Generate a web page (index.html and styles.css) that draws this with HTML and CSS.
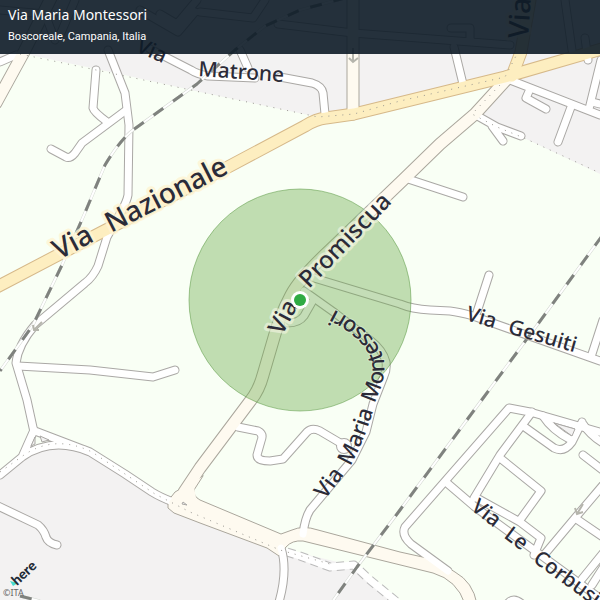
FILE: index.html
```html
<!DOCTYPE html>
<html lang="it">
<head>
<meta charset="utf-8">
<title>Via Maria Montessori</title>
<link rel="stylesheet" href="styles.css">
</head>
<body>
<main class="map">
<svg class="canvas" viewBox="0 0 600 600" preserveAspectRatio="xMidYMid slice" aria-label="Mappa">
<defs>
  <g id="streets">
    <path d="M108 50L125 93L129 125L128 195Q127 201 121 212L107 237L98 266Q93 277 85 283L35 325Q18 345 16 363L27 400L34 432"/>
    <path d="M96 70L93 108Q94 112 106 121M51 149L66 157Q70 159 75 153L82 143L125 111"/>
    <path d="M18 366L90 370L153 377L175 370"/>
    <path d="M150 49L191 70Q197 74 208 76L255 78M280 77L312 83Q322 86 323 93L325 114M240 50L248 68"/>
    <path d="M454 47L463 84M510 80L600 115M530 89L526 98L546 109M571 107L558 142M601 60L589 109M600 104L592 102"/>
    <path d="M474 114L497 127L521 136M492 126L503 141"/>
    <path d="M405 178L463 197"/>
    <path d="M314 278L400 304Q412 309 430 310L450 311Q459 312 473 316L600 361M489 275L477 312M591 357L603 320"/>
    <path d="M304 291L335 313L370 340Q383 350 386 362Q387 370 384 376L373 404L366 432L352 460L310 510Q305 518 303 534"/>
    <path d="M312 302L304 316Q299 323 288 323"/>
    <path d="M238 427L258 431Q264 434 261 441L257 455Q257 461 270 461L283 459L307 432Q312 427 320 431L342 444"/>
    <path d="M0 475L22 457Q52 436 90 452L125 474L152 492Q160 497 173 502M34 430L22 457M35 431L90 452"/>
    <path d="M-2 506L38 525Q44 530 46 537Q48 543 57 545"/>
    <path d="M281 548Q288 570 279 602"/>
    <path d="M603 433L530 412L509 408L405 527Q401 535 411 544L448 571"/>
    <path d="M447 483L475 507L605 602M532 412L500 455L474 498M500 458L541 491L520 520M475 497L520 522L541 538L534 555"/>
    <path d="M526 428L554 448Q564 453 572 442L582 422M543 416Q552 430 571 440M583 424Q590 435 603 443M583 455L605 472"/>
    <path d="M603 485L575 518L544 555M575 518L603 537M604 552L582 579M608 560L592 585M0 62L16 55M506 606Q513 594 524 606"/>
    <path d="M0 10L45 14L55 40M75 0L60 35M140 10L178 32L195 12M160 14L177 24L197 0M200 12L253 18L265 0M278 24L353 33L510 45M451 28L470 28L470 40M565 0L572 50M585 38L588 60"/>
  </g>
  <g id="connectors">
    <path d="M-4 103L25 50L52 -4M353 0V114"/>
    <path d="M507 79L475 114L440 144L403 180L330 250Q300 278 291 295Q280 316 275 334L263 375Q259 390 251 400L200 468L184 492"/>
  </g>
  <path id="junction" d="M182 488L175 492L168 501L168 508L174 513L200 523L267 548L279 556L286 547Q292 540 303 541L433 573Q457 580 465 604L477 604Q473 582 455 572Q443 563 427 558L400 552L318 530Q303 525 292 530L281 534L200 500Q193 496 194 490L203 476Z"/>
  <g id="highway">
    <path d="M-5 288L100 233L228 167L305 126Q316 119 326 118L354 114L505 77L605 48"/>
    <path d="M512 76L521 52L530 0"/>
  </g>
  <g id="railway">
    <path d="M345 -2L300 10L265 26L235 50L197 84L133 130Q120 140 105 165L84 215L62 265L33 325L0 371"/>
    <path d="M602 236L535 328L478 405L400 510L357 567L332 602M20 596L40 601"/>
  </g>
  <path id="lane" d="M287 552L300 556L330 567L354 565L370 580L397 602"/>
  <path id="montessori" d="M325 500L349 468C362 446 371 420 376 400C383 384 385 374 384 362C382 350 374 337 361 327Q350 317 327 306"/>
</defs>

<rect class="land" width="600" height="600"/>
<path class="town" d="M0 0H600V174L524 138L472 114L507 79L318 117L200 92L120 74L30 55L0 60Z"/>
<path class="town" d="M0 478L22 457Q52 436 90 452L160 497L200 518L280 548L350 565L398 600H0Z"/>

<use href="#lane" class="lane-edge"/>
<use href="#lane" class="lane-fill"/>
<use href="#streets" class="street-edge"/>
<circle class="bulb-edge" cx="344" cy="446" r="8"/>
<use href="#connectors" class="connector-edge"/>
<use href="#junction" class="junction"/>
<use href="#highway" class="highway-edge"/>
<use href="#streets" class="street-fill"/>
<circle class="bulb" cx="344" cy="446" r="7"/>
<use href="#connectors" class="connector-fill"/>
<path class="junction-fill" d="M185 486L176 493L169 502L171 507L190 507L196 498L194 487L198 480Z"/>
<use href="#railway" class="rail-edge"/>
<use href="#railway" class="rail-bed"/>
<use href="#railway" class="rail-dash"/>
<use href="#highway" class="highway-fill"/>

<path class="island" d="M35 437L31 446L35 444ZM40 436L49 440L42 442ZM183 502L187 505L182 504ZM554 423L575 429L572 436Z"/>
<path class="dots" d="M0 472L24 455Q55 434 92 452L155 494L190 512L280 550L330 564"/>
<path class="dots" d="M20 54L120 75L200 92L318 117L354 114L400 101L505 77L517 54M500 85L472 114L497 127L524 138L600 173"/>
<path class="arrow" d="M353 48V62M349 58L353 62L358 58M42 322L34 330M33 325L34 330L39 330M583 504L577 514M575 508L577 514L583 512"/>

<circle class="zone" cx="300" cy="300" r="111"/>

<g class="labels">
  <g class="label-highway">
    <text transform="translate(59 260) rotate(-28)">Via</text>
    <text transform="translate(111 233) rotate(-27)">Nazionale</text>
    <text transform="translate(528 39) rotate(-86)">Via</text>
  </g>
  <g class="label-connector">
    <text transform="translate(282 336) rotate(-62)">Via</text>
    <text transform="translate(309 289) rotate(-46)">Promiscua</text>
  </g>
  <g class="label-street">
    <text transform="translate(135 51) rotate(24)">Via</text>
    <text transform="translate(198 76) rotate(4)">Matrone</text>
    <text transform="translate(465 320) rotate(16)">Via</text>
    <text transform="translate(507 333) rotate(16)">Gesuiti</text>
    <text transform="translate(470 509) rotate(38)">Via</text>
    <text transform="translate(503 537) rotate(37)">Le</text>
    <text transform="translate(532 561) rotate(36)">Corbusier</text>
  </g>
  <g class="label-curved">
    <text><textPath href="#montessori">Via</textPath></text>
    <text><textPath href="#montessori" startOffset="42">Maria</textPath></text>
    <text><textPath href="#montessori" startOffset="109">Montessori</textPath></text>
  </g>
</g>

<circle class="pin-ring" cx="300" cy="300" r="9"/>
<circle class="pin" cx="300" cy="300" r="6"/>

<path class="logo-mark" d="M10 581L18 583L13 586Z"/>
<text class="logo" transform="translate(17 586) rotate(-43)">here</text>
<text class="credit" x="3" y="596">©ITA</text>
</svg>
<header class="bar">
  <h1 class="title">Via Maria Montessori</h1>
  <p class="place">Boscoreale, Campania, Italia</p>
</header>
</main>
</body>
</html>
```
FILE: styles.css
```css
body { margin: 0; font-family: "Noto Sans", sans-serif; }
.map { position: relative; min-height: 100vh; overflow: hidden; }
.canvas { display: block; width: 100%; height: 100vh; }

.bar { position: absolute; top: 0; left: 0; right: 0; box-sizing: border-box; padding: 5px 8px 10px; background: rgba(13, 27, 39, 0.9); color: #fff; }
.title { margin: 0; font-size: 14px; line-height: 20px; font-weight: 400; }
.place { margin: 4px 0 0; font-size: 11px; line-height: 15px; font-family: Roboto, sans-serif; }

use { fill: none; stroke-linejoin: round; stroke-linecap: round; }
.land { fill: #f9fff5; }
.town { fill: #f3f2f2; }

.street-edge { stroke: #aaa8a5; stroke-width: 9px; }
.street-fill { stroke: #fff; stroke-width: 7px; }
.bulb-edge { fill: #aaa8a5; }
.bulb { fill: #fff; }
.connector-edge { stroke: #aaa69c; stroke-width: 13px; }
.connector-fill { stroke: #fefaf0; stroke-width: 11px; }
.junction { fill: #fefaf0; stroke: #aaa69c; stroke-width: 1px; }
.junction-fill { fill: #fefaf0; }
.highway-edge { stroke: #d6b98a; stroke-width: 13px; }
.highway-fill { stroke: #fdeec0; stroke-width: 11px; }
.lane-edge { stroke: #bbb; stroke-width: 9px; stroke-dasharray: 8 5; stroke-linecap: butt; }
.lane-fill { stroke: #fff; stroke-width: 7px; }

.rail-edge { stroke: #d3d7d1; stroke-width: 3px; stroke-linecap: butt; }
.rail-bed { stroke: #fff; stroke-width: 2px; stroke-linecap: butt; }
.rail-dash { stroke: #7f827e; stroke-width: 3px; stroke-dasharray: 12 12; stroke-linecap: butt; }

.island { fill: #f3f2f2; stroke: #aaa8a5; stroke-width: 1px; }
.dots { fill: none; stroke: #999791; stroke-width: 1px; stroke-dasharray: 1 6; }
.arrow { fill: none; stroke: #b5b5ac; stroke-width: 2px; }

.zone { fill: rgba(107, 171, 75, 0.4); stroke: rgba(80, 145, 55, 0.5); stroke-width: 1px; }
.pin-ring { fill: #fff; }
.pin { fill: #2fab43; }

.labels { fill: #2b2b38; font-weight: 500; paint-order: stroke; stroke-linejoin: round; }
.label-highway { font-size: 28px; stroke: rgba(255, 244, 210, 0.8); stroke-width: 6px; }
.label-connector { font-size: 24px; stroke: rgba(255, 251, 238, 0.5); stroke-width: 6px; }
.label-street { font-size: 21px; stroke: rgba(255, 255, 255, 0.3); stroke-width: 2px; }
.label-curved { font-size: 22px; stroke: rgba(255, 255, 255, 0.3); stroke-width: 2px; }

.logo { fill: #1e2a36; font-family: Lato, sans-serif; font-size: 14px; font-weight: 900; }
.logo-mark { fill: #48dad0; }
.credit { fill: #666; font-size: 9px; }
```
